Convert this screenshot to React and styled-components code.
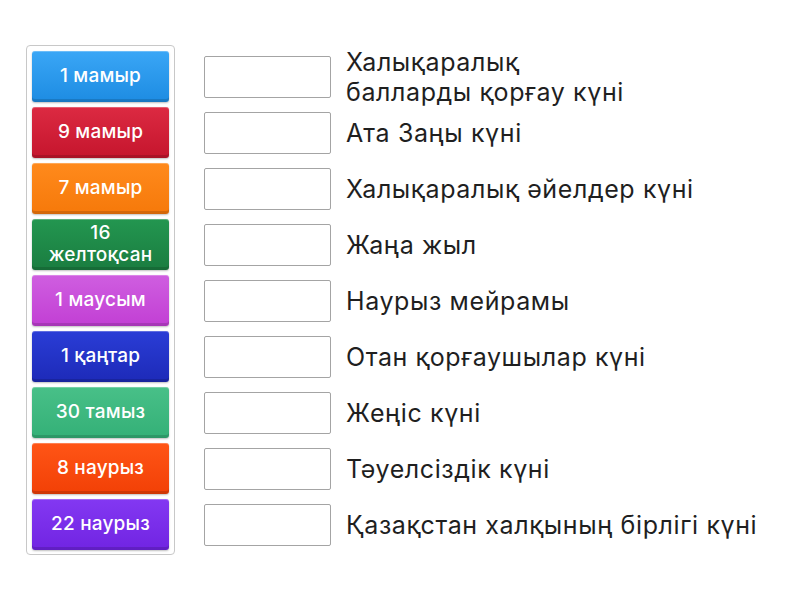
import React from 'react';
import styled, { createGlobalStyle } from 'styled-components';

const GlobalStyle = createGlobalStyle`
  html, body {
    margin: 0;
    padding: 0;
    background: #ffffff;
    font-family: Inter, "Noto Sans", sans-serif;
  }
`;

const Page = styled.div`
  width: 800px;
  height: 600px;
  display: flex;
  align-items: flex-start;
  padding: 45px 0 0 26px;
  box-sizing: border-box;
`;

const TilePanel = styled.div`
  width: 149px;
  box-sizing: border-box;
  border: 1px solid #c8c8c8;
  border-radius: 4px;
  padding: 5px 5px 4px 5px;
  display: flex;
  flex-direction: column;
  gap: 5px;
`;

const Tile = styled.div`
  height: 51px;
  border-radius: 3px;
  background: linear-gradient(180deg, ${(p) => p.$top} 0%, ${(p) => p.$bottom} 100%);
  box-shadow: inset 0 -3px 0 rgba(0, 0, 0, 0.14), inset 0 1px 0 rgba(255, 255, 255, 0.25),
    0 1px 2px rgba(0, 0, 0, 0.25);
  display: flex;
  align-items: center;
  justify-content: center;
  text-align: center;
  color: #ffffff;
  font-size: 19px;
  font-weight: 500;
  letter-spacing: 0.2px;
  line-height: 22px;
  padding: 0 8px 2px;
  box-sizing: border-box;
`;

const Answers = styled.div`
  margin-left: 29px;
  padding-top: 4px;
  display: flex;
  flex-direction: column;
`;

const Row = styled.div`
  height: 56px;
  display: flex;
  align-items: center;
`;

const Slot = styled.div`
  width: 127px;
  height: 42px;
  box-sizing: border-box;
  border: 1px solid #a4a4a4;
  border-radius: 2px;
  background: #ffffff;
  flex-shrink: 0;
`;

const Label = styled.div`
  margin-left: 15px;
  font-size: 25px;
  letter-spacing: 0.6px;
  line-height: 30px;
  color: #1f1f1f;
  white-space: nowrap;
`;

const tiles = [
  { text: '1 мамыр', top: '#3aa6f6', bottom: '#1d8ce2' },
  { text: '9 мамыр', top: '#dc2a42', bottom: '#c5152d' },
  { text: '7 мамыр', top: '#ff8a1c', bottom: '#f6790a' },
  { text: '16 желтоқсан', top: '#239650', bottom: '#1a7d40' },
  { text: '1 маусым', top: '#cf5ee0', bottom: '#c23fd4' },
  { text: '1 қаңтар', top: '#2a3dd6', bottom: '#1d2ab8' },
  { text: '30 тамыз', top: '#48c088', bottom: '#34b077' },
  { text: '8 наурыз', top: '#ff5516', bottom: '#f24006' },
  { text: '22 наурыз', top: '#8338f2', bottom: '#7124e2' },
];

const labels = [
  'Халықаралық балларды қорғау күні',
  'Ата Заңы күні',
  'Халықаралық әйелдер күні',
  'Жаңа жыл',
  'Наурыз мейрамы',
  'Отан қорғаушылар күні',
  'Жеңіс күні',
  'Тәуелсіздік күні',
  'Қазақстан халқының бірлігі күні',
];

export default function App() {
  return (
    <>
      <GlobalStyle />
      <Page>
        <TilePanel>
          {tiles.map((t) => (
            <Tile key={t.text} $top={t.top} $bottom={t.bottom}>
              {t.text}
            </Tile>
          ))}
        </TilePanel>
        <Answers>
          {labels.map((l, i) => (
            <Row key={l}>
              <Slot />
              <Label>{i === 0 ? <>Халықаралық<br />балларды қорғау күні</> : l}</Label>
            </Row>
          ))}
        </Answers>
      </Page>
    </>
  );
}
